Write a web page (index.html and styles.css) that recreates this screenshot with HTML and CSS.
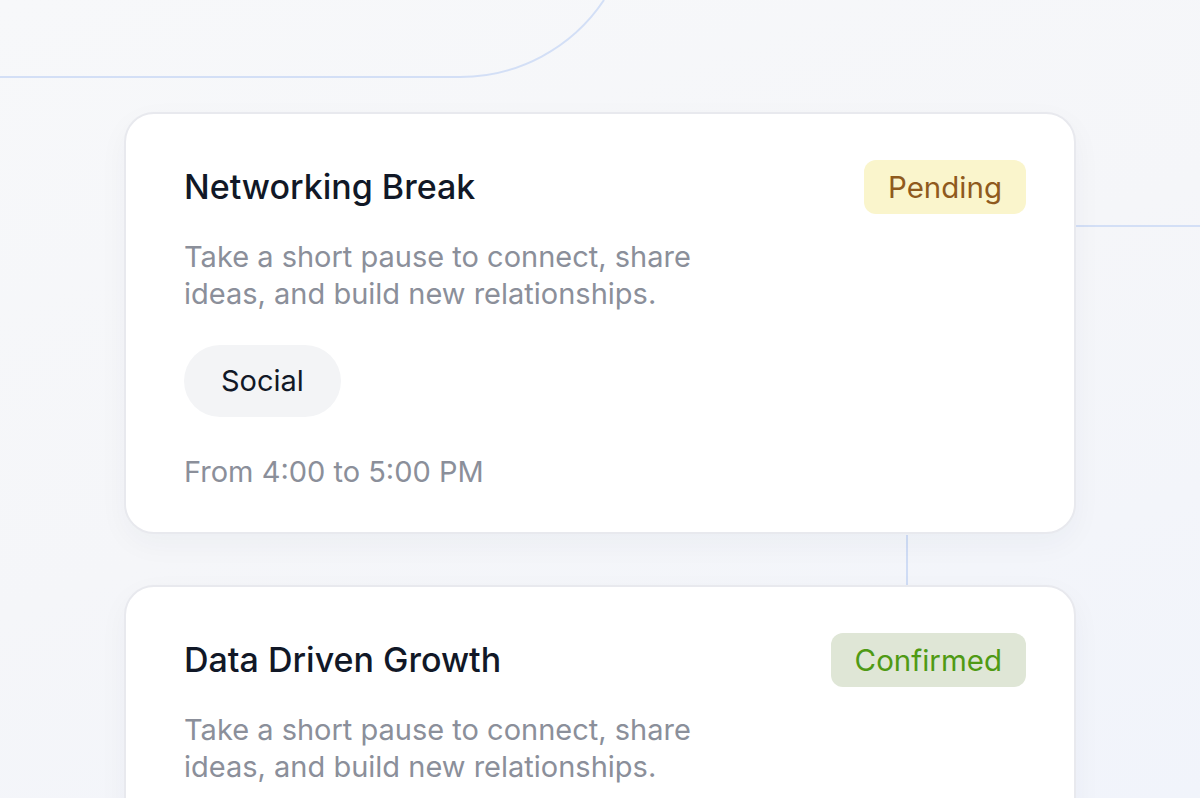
FILE: index.html
```html
<!DOCTYPE html>
<html lang="en">
<head>
<meta charset="utf-8">
<title>Agenda</title>
<link rel="stylesheet" href="styles.css">
</head>
<body>
<svg class="deco" width="1200" height="798" viewBox="0 0 1200 798" aria-hidden="true">
  <path d="M0 77 H460 A173 173 0 0 0 604 0" fill="none" stroke="#d3dff6" stroke-width="2"/>
  <path d="M1076 226 H1200" fill="none" stroke="#d3dff6" stroke-width="2"/>
  <path d="M907 535 V586" fill="none" stroke="#cfdcf5" stroke-width="2"/>
</svg>
<main class="list">
  <article class="card">
    <div class="card-head">
      <h2 class="title">Networking Break</h2>
      <span class="badge badge-pending">Pending</span>
    </div>
    <p class="desc">Take a short pause to connect, share<br>ideas, and build new relationships.</p>
    <span class="tag">Social</span>
    <p class="time">From 4:00 to 5:00 PM</p>
  </article>
  <article class="card">
    <div class="card-head">
      <h2 class="title">Data Driven Growth</h2>
      <span class="badge badge-confirmed">Confirmed</span>
    </div>
    <p class="desc">Take a short pause to connect, share<br>ideas, and build new relationships.</p>
  </article>
</main>
</body>
</html>
```
FILE: styles.css
```css
* { box-sizing: border-box; }
html, body {
  margin: 0;
  height: 100%;
  overflow: hidden;
}
body {
  font-family: Inter, "Noto Sans", sans-serif;
  background: linear-gradient(160deg, #f7f8fa 0%, #f5f6f9 50%, #f1f4fb 100%);
  width: 1200px;
  height: 798px;
  position: relative;
}
.deco {
  position: absolute;
  left: 0;
  top: 0;
  z-index: 0;
}
.list {
  position: relative;
  z-index: 1;
  padding: 112px 0 0 124px;
  display: flex;
  flex-direction: column;
  gap: 51px;
}
.card {
  width: 952px;
  background: #ffffff;
  border: 2px solid #e8e9ee;
  border-radius: 30px;
  box-shadow: 0 10px 30px rgba(30, 41, 80, 0.04);
  padding: 46px 48px 42px 58px;
  display: flex;
  flex-direction: column;
  align-items: flex-start;
}
.card-head {
  width: 100%;
  display: flex;
  align-items: center;
  justify-content: space-between;
  height: 54px;
}
.title {
  margin: 0;
  font-size: 34px;
  font-weight: 500;
  color: #111827;
  line-height: 48px;
}
.badge {
  height: 54px;
  padding: 0 24px;
  border-radius: 12px;
  font-size: 29.5px;
  line-height: 54px;
  font-weight: 400;
}
.badge-pending {
  background: #faf5cc;
  color: #8f5a1d;
}
.badge-confirmed {
  background: #dfe6d6;
  color: #4f9a14;
}
.desc {
  margin: 24px 0 0;
  font-size: 29px;
  line-height: 37px;
  color: #8b8f9a;
}
.tag {
  margin-top: 33px;
  height: 72px;
  padding: 0 37px;
  border-radius: 36px;
  background: #f3f4f6;
  color: #111827;
  font-size: 29px;
  line-height: 72px;
}
.time {
  margin: 36px 0 0;
  font-size: 29px;
  line-height: 37px;
  color: #8b8f9a;
}
```
